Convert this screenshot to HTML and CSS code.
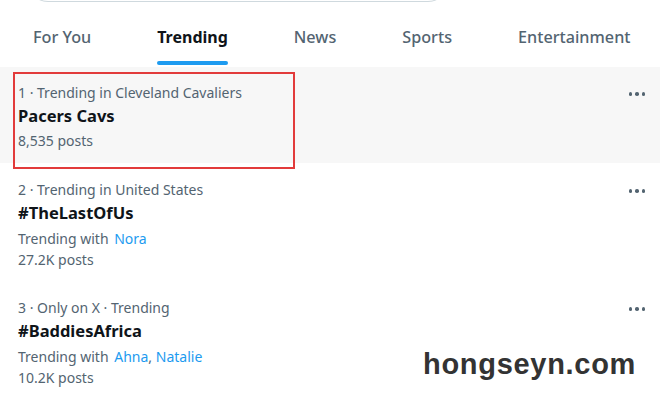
FILE: index.html
```html
<!DOCTYPE html>
<html>
<head>
<meta charset="utf-8">
<link rel="stylesheet" href="styles.css">
</head>
<body>
<div class="page">
  <div class="search"></div>
  <nav class="tabs">
    <div class="tab">For You</div>
    <div class="tab active">Trending<span class="bar"></span></div>
    <div class="tab">News</div>
    <div class="tab">Sports</div>
    <div class="tab">Entertainment</div>
  </nav>
  <div class="trend hover">
    <div class="body">
      <div class="meta">1 · Trending in Cleveland Cavaliers</div>
      <div class="title">Pacers Cavs</div>
      <div class="meta posts">8,535 posts</div>
    </div>
    <div class="more"><i></i><i></i><i></i></div>
    <div class="highlight"></div>
  </div>
  <div class="trend">
    <div class="body">
      <div class="meta">2 · Trending in United States</div>
      <div class="title">#TheLastOfUs</div>
      <div class="meta with">Trending with <a>Nora</a></div>
      <div class="meta posts">27.2K posts</div>
    </div>
    <div class="more"><i></i><i></i><i></i></div>
  </div>
  <div class="trend">
    <div class="body">
      <div class="meta">3 · Only on X · Trending</div>
      <div class="title">#BaddiesAfrica</div>
      <div class="meta with">Trending with <a>Ahna</a>, <a>Natalie</a></div>
      <div class="meta posts">10.2K posts</div>
    </div>
    <div class="more"><i></i><i></i><i></i></div>
  </div>
  <div class="watermark">hongseyn.com</div>
</div>
</body>
</html>
```
FILE: styles.css
```css
* { box-sizing: border-box; }
html, body { margin: 0; padding: 0; background: #fff; }
body { width: 660px; height: 405px; overflow: hidden; font-family: "Segoe UI", "Noto Sans", "Open Sans", sans-serif; color: #0f1419; }
.page { position: relative; width: 660px; height: 405px; overflow: hidden; }
.search { margin: -40px 0 0 27px; width: 422px; height: 42px; border: 1px solid #cfd9de; border-radius: 9999px; }
.tabs { display: flex; gap: 66px; padding-left: 33px; height: 65px; align-items: flex-start; white-space: nowrap; }
.tab { position: relative; font-size: 16.2px; line-height: 24px; padding-top: 23px; color: #536471; font-weight: 500; height: 65px; }
.tab.active { color: #0f1419; font-weight: 700; font-size: 16px; }
.tab .bar { position: absolute; left: 0; right: 0; bottom: 2px; height: 4px; border-radius: 2px; background: #1d9bf0; }
.trend { position: relative; display: flex; justify-content: space-between; padding: 17px 15px 11px 18px; }
.trend.hover { background: #f7f7f7; padding-top: 16px; }
.meta { font-size: 14px; line-height: 19px; color: #536471; }
.title { font-size: 16.5px; line-height: 28px; font-weight: 700; color: #0f1419; }
.meta.with { line-height: 23px; }
.meta.posts { line-height: 22px; }
.trend:not(.hover) .meta.posts { line-height: 20px; }
.with a { color: #1d9bf0; margin-left: 2px; }
.with a + a { margin-left: 0; }
.more { display: flex; gap: 3px; padding-top: 9px; margin-right: 0; height: 13px; }
.more i { display: block; width: 3.5px; height: 3.5px; border-radius: 50%; background: #536471; }
.highlight { position: absolute; left: 13px; top: 5px; width: 282px; height: 97px; border: 2px solid #e23b3b; }
.watermark { position: absolute; left: 423px; top: 348px; font-family: "Liberation Sans", Arial, sans-serif; font-weight: 700; font-size: 29px; letter-spacing: 0.7px; color: #333; }
```
